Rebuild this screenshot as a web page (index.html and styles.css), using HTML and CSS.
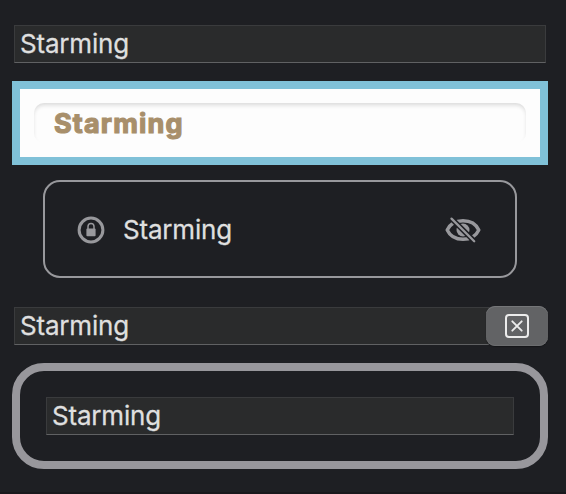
FILE: index.html
```html
<!DOCTYPE html>
<html lang="en">
<head>
<meta charset="utf-8">
<title>Text fields</title>
<link rel="stylesheet" href="styles.css">
</head>
<body>
<main class="stack">
  <div class="field"><span class="text">Starming</span></div>
  <div class="blue-frame">
    <div class="inset-field"><span class="text bold">Starming</span></div>
  </div>
  <div class="outline-field">
    <svg class="lock" viewBox="0 0 28 28">
      <circle cx="14" cy="14" r="11.9" fill="none" stroke="currentColor" stroke-width="3"/>
      <rect x="9.4" y="12.6" width="9.2" height="7.7" rx="1" fill="currentColor"/>
      <path d="M11 13v-2.4a3 3.2 0 0 1 6 0V13" fill="none" stroke="currentColor" stroke-width="1.5"/>
    </svg>
    <span class="text">Starming</span>
    <svg class="eye" viewBox="0 0 36 28">
      <path d="M2.2 14C5.2 7.5 10.6 4.7 18 4.7S30.8 7.5 33.8 14C30.8 20.5 25.4 23.3 18 23.3S5.2 20.5 2.2 14Z" fill="none" stroke="currentColor" stroke-width="3.4" stroke-linejoin="round"/>
      <circle cx="18" cy="14" r="6.5" fill="currentColor"/>
      <path d="M6.5 2.6 29.2 25.2" stroke="#1e1f23" stroke-width="5.4"/>
      <path d="M6.5 2.6 29.2 25.2" stroke="currentColor" stroke-width="2.3" stroke-linecap="round"/>
    </svg>
  </div>
  <div class="search">
    <div class="field"><span class="text">Starming</span></div>
    <button class="clear" aria-label="Clear">
      <svg viewBox="0 0 24 24">
        <rect x="1" y="1" width="22" height="22" rx="3" fill="none" stroke="currentColor" stroke-width="2"/>
        <path d="m7.3 7.3 9.4 9.4m0-9.4-9.4 9.4" stroke="currentColor" stroke-width="1.9" stroke-linecap="round"/>
      </svg>
    </button>
  </div>
  <div class="ring">
    <div class="field"><span class="text">Starming</span></div>
  </div>
</main>
</body>
</html>
```
FILE: styles.css
```css
* { box-sizing: border-box; }
body {
  margin: 0;
  height: 494px;
  overflow: hidden;
  background: #1e1f23;
  font-family: Inter, "Liberation Sans", sans-serif;
}
.stack {
  height: 494px;
  padding: 25px 18px 0 12px;
  border-bottom: 2px solid #19181c;
}
.text {
  font-size: 26px;
  line-height: 36px;
  letter-spacing: -0.2px;
  color: #dfdfdf;
  -webkit-text-stroke: 0.3px #dfdfdf;
  white-space: nowrap;
}
.field {
  display: flex;
  height: 38px;
  margin: 0 2px;
  padding-left: 5px;
  background: #2a2b2c;
  border: 1px solid #3a3b3d;
  border-bottom-color: #606163;
}
.blue-frame {
  height: 84px;
  margin-top: 18px;
  padding: 14px;
  background: #fdfdfd;
  border: 8px solid #80c1d8;
}
.inset-field {
  height: 40px;
  padding-left: 20px;
  border-radius: 10px;
  box-shadow: inset 0 3px 4px -1px #d8d8d8;
}
.bold {
  display: block;
  font-size: 27px;
  font-weight: 700;
  letter-spacing: 1.15px;
  line-height: 41px;
  color: #a88f6b;
  -webkit-text-stroke: 1.2px #a88f6b;
}
.outline-field {
  display: flex;
  align-items: center;
  height: 98px;
  margin: 15px 31px 0;
  padding: 1px 34px 0 32px;
  border: 2px solid #98989c;
  border-radius: 17px;
  color: #98989c;
}
.lock { width: 28px; height: 28px; margin-right: 18px; }
.eye { width: 36px; height: 28px; margin-left: auto; }
.search {
  display: flex;
  align-items: center;
  height: 40px;
  margin-top: 28px;
}
.search .field {
  flex: 1;
  margin-right: -10px;
}
.clear {
  position: relative;
  display: flex;
  align-items: center;
  justify-content: center;
  width: 62px;
  height: 40px;
  padding: 0 1px 1px 0;
  border: 0;
  border-radius: 9px;
  background: #626365;
  box-shadow: inset 0 1px #757678, inset 0 -1px #6c6d6f, 0 1px 1px #151619;
  color: #ececec;
}
.clear svg { width: 24px; height: 24px; }
.ring {
  height: 106px;
  margin-top: 17px;
  padding: 26px 24px;
  border: 8px solid #98979c;
  border-radius: 32px;
}
```
